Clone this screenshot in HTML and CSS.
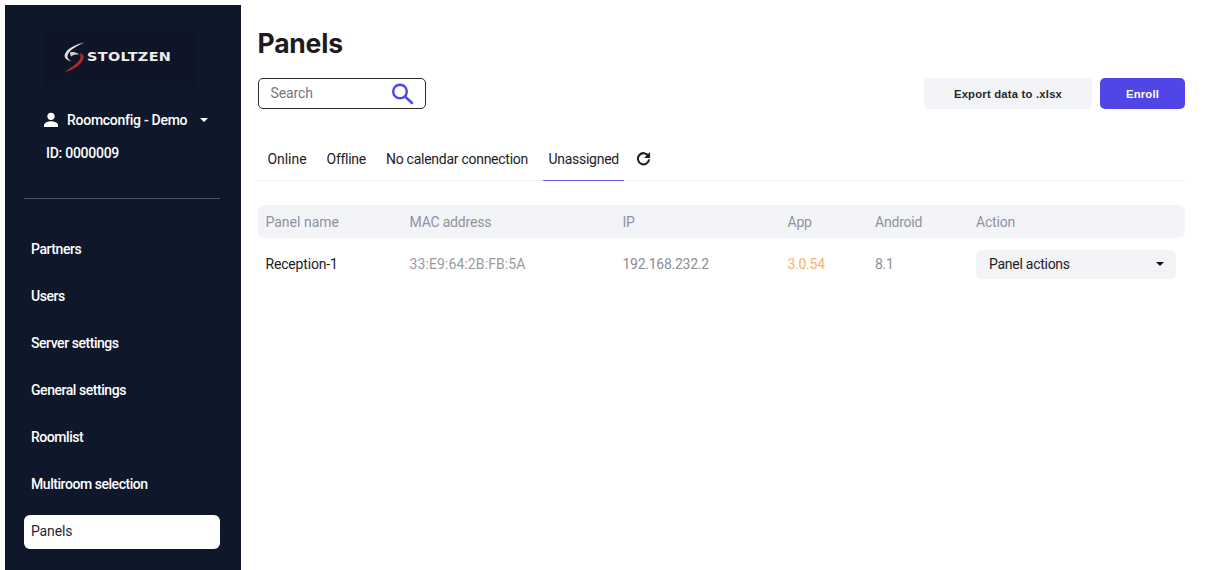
FILE: index.html
```html
<!DOCTYPE html>
<html lang="en">
<head>
<meta charset="utf-8">
<title>Panels</title>
<link rel="stylesheet" href="styles.css">
</head>
<body>
<div class="app">
  <aside class="sidebar">
    <div class="logo">
      <svg class="logo-mark" width="21" height="31" viewBox="0 0 21 31">
        <path d="M20.500 0.500C13 2 3 6 0.800 12.500C-0.200 16 3 18.500 7.500 19.500C4 17.500 2.500 15 4 12C7 7 13 4 20.500 0.500Z" fill="#e4e4e6"/>
        <path d="M6 10.500C9.500 9.500 13 10.500 15 12.500C12 12.200 9 12.500 7.500 14.500C6.300 13.500 6 12 6 10.500Z" fill="#cfcfd2"/>
        <path d="M0.500 30.500C7 28.500 17.500 23.500 19.500 16.500C20.200 13.500 18 11.500 15.500 11C17.500 14.500 16.500 17.500 13.500 20.500C10 24 4 27 0.500 30.500Z" fill="#b3282d"/>
      </svg>
      <span class="logo-text">STOLTZEN</span>
    </div>
    <div class="account">
      <svg class="user-icon" width="16" height="16" viewBox="0 0 16 16"><circle cx="8" cy="4.300" r="3.600" fill="#fff"/><path d="M1 15v-2c0-2.500 4.500-3.800 7-3.800s7 1.300 7 3.800v2z" fill="#fff"/></svg>
      <span class="account-name">Roomconfig - Demo</span>
      <span class="caret caret-light"></span>
    </div>
    <div class="account-id">ID: 0000009</div>
    <hr class="divider">
    <nav class="nav">
      <a class="nav-item">Partners</a>
      <a class="nav-item">Users</a>
      <a class="nav-item">Server settings</a>
      <a class="nav-item">General settings</a>
      <a class="nav-item">Roomlist</a>
      <a class="nav-item">Multiroom selection</a>
      <a class="nav-item active">Panels</a>
    </nav>
  </aside>
  <main class="main">
    <h1 class="title">Panels</h1>
    <div class="toolbar">
      <label class="search">
        <span class="search-text">Search</span>
        <svg width="24" height="24" viewBox="0 0 24 24" fill="none" stroke="#4f46e5" stroke-width="2.400" stroke-linecap="round"><circle cx="10" cy="9.500" r="6.800"/><path d="M15 14.500l7 6.500"/></svg>
      </label>
      <div class="actions">
        <button class="btn btn-light">Export data to .xlsx</button>
        <button class="btn btn-primary">Enroll</button>
      </div>
    </div>
    <div class="tabs">
      <a class="tab tab-short">Online</a>
      <a class="tab">Offline</a>
      <a class="tab">No calendar connection</a>
      <a class="tab tab-active">Unassigned</a>
      <svg class="refresh" width="15" height="15" viewBox="0 0 16 16" fill="none"><path d="M13.200 5.200A6 6 0 1 0 14 9" stroke="#1f1f1f" stroke-width="2.200"/><path d="M15 1v6.500h-6.500z" fill="#1f1f1f"/></svg>
    </div>
    <div class="table">
      <div class="row head">
        <span>Panel name</span><span>MAC address</span><span>IP</span><span>App</span><span>Android</span><span>Action</span>
      </div>
      <div class="row body-row">
        <span class="name">Reception-1</span>
        <span class="mac">33:E9:64:2B:FB:5A</span>
        <span>192.168.232.2</span>
        <span class="app-version">3.0.54</span>
        <span>8.1</span>
        <div class="select"><span>Panel actions</span><span class="caret caret-dark"></span></div>
      </div>
    </div>
  </main>
</div>
</body>
</html>
```
FILE: styles.css
```css
* { box-sizing: border-box; }
html, body { margin: 0; height: 100%; background: #fff; overflow: hidden; }
body { font-family: Roboto, "Liberation Sans", sans-serif; font-size: 14px; letter-spacing: -0.270px; color: #1f2024; }
.app { display: flex; height: 570px; padding: 5px 0 0 5px; }

.sidebar { width: 236px; flex: none; background: #0f172a; color: #fff; padding: 0 21px 0 19px; }
.logo { display: flex; align-items: center; justify-content: flex-start; width: 150px; height: 57px; margin: 25px 0 0 21px; padding: 0 0 3px 19px; gap: 2px; background: #0e1526; }
.logo-mark { flex: none; }
.logo-text { font-family: "DejaVu Sans", sans-serif; font-weight: 700; font-size: 12px; letter-spacing: 0.300px; color: #eeeeee; transform: scaleX(1.200); transform-origin: left center; }
.account { display: flex; align-items: center; height: 20px; margin-top: 23px; padding-left: 19px; font-weight: 500; }
.user-icon { flex: none; }
.account-name { margin-left: 8px; }
.caret { display: inline-block; width: 0; height: 0; border-left: 4px solid transparent; border-right: 4px solid transparent; border-top: 4px solid #fff; }
.caret-light { margin-left: 13px; }
.account-id { margin: 13px 0 0 22px; height: 20px; line-height: 20px; font-weight: 500; }
.divider { border: 0; height: 1px; background: #4b5360; margin: 35px 0 0; }
.nav { display: flex; flex-direction: column; margin-top: 34px; gap: 14px; }
.nav-item { display: block; height: 33px; line-height: 33px; padding-left: 7px; border-radius: 6px; font-weight: 500; letter-spacing: -0.450px; color: #fff; }
.nav-item.active { height: 34px; background: #fff; color: #1f2937; font-weight: 400; letter-spacing: -0.150px; }

.main { flex: 1; min-width: 0; padding: 0 28px 0 16.500px; }
.title { margin: 0; height: 73px; padding-top: 21px; font-family: Inter, sans-serif; font-size: 26.500px; line-height: 34px; font-weight: 700; color: #1c1c1e; letter-spacing: -0.200px; }
.toolbar { display: flex; justify-content: space-between; align-items: flex-start; }
.search { width: 168.500px; height: 31px; border: 1px solid #2b2b2f; border-radius: 5px; display: flex; align-items: center; justify-content: space-between; padding: 0 11px 0 12px; }
.search-text { color: #77777f; padding-bottom: 2px; letter-spacing: -0.100px; }
.actions { display: flex; gap: 8px; }
.btn { height: 31px; border: 0; border-radius: 5px; font-family: "Liberation Sans", Arial, sans-serif; font-size: 11.300px; font-weight: 700; letter-spacing: 0.200px; }
.btn-light { width: 168px; background: #f3f4f8; color: #27272a; }
.btn-primary { width: 85px; background: #4f46e5; color: #fff; }

.tabs { display: flex; align-items: center; height: 72px; padding-top: 30px; border-bottom: 1px solid #f0f0f3; margin-bottom: 24px; }
.tab { height: 41px; line-height: 41px; padding: 0 10px; color: #1f2024; white-space: nowrap; }
.tab-short { letter-spacing: -0.050px; }
.tab-active { border-bottom: 1px solid #6c63ee; margin-bottom: -1px; height: 42px; padding: 0 5.500px; margin-left: 5px; }
.refresh { margin-left: 12px; margin-bottom: 2px; }

.table { width: 100%; }
.row { display: grid; grid-template-columns: 144px 213px 165px 87.500px 101px 1fr; align-items: center; padding-left: 8px; }
.head { height: 33px; background: #f3f4f8; border-radius: 6px; color: #8f929c; letter-spacing: -0.200px; }
.head span:first-child { letter-spacing: 0; }
.body-row { height: 52px; color: #8e8e93; padding-right: 9px; }
.name { color: #1f2024; letter-spacing: -0.180px; }
.mac { letter-spacing: 0.100px; color: #9a9a9f; }
.app-version { color: #f6b26b; }
.select { height: 29px; background: #f3f4f8; border-radius: 6px; display: flex; align-items: center; justify-content: space-between; padding: 0 12px 0 13px; color: #1f2024; }
.caret-dark { border-top-color: #111; }
```
